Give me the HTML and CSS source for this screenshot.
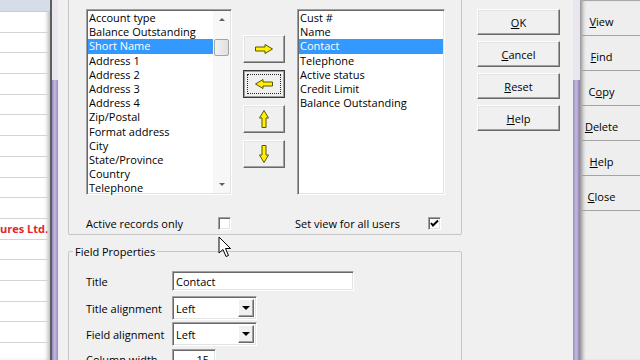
FILE: index.html
```html
<!DOCTYPE HTML>
<html>

<head>
    <title>Customer view setup</title>
    <link rel="stylesheet" href="styles.css">
</head>

<body>
    <div class="back-list">
        <div class="back-head"></div>
        <div class="back-row"></div>
        <div class="back-row"></div>
        <div class="back-row"></div>
        <div class="back-row"></div>
        <div class="back-row"></div>
        <div class="back-row"></div>
        <div class="back-row"></div>
        <div class="back-row"></div>
        <div class="back-row"></div>
        <div class="back-row"></div>
        <div class="back-row red">ures Ltd.</div>
        <div class="back-row"></div>
        <div class="back-row"></div>
        <div class="back-row"></div>
        <div class="back-row"></div>
        <div class="back-row"></div>
        <div class="back-row"></div>
    </div>

    <div class="band"></div>

    <div class="dialog">
        <div class="dialog-main">
            <fieldset class="group group-fields">
                <div class="lists">
                    <div class="listbox listbox-left">
                        <ul class="items">
                            <li>Account type</li>
                            <li>Balance Outstanding</li>
                            <li class="selected">Short Name</li>
                            <li>Address 1</li>
                            <li>Address 2</li>
                            <li>Address 3</li>
                            <li>Address 4</li>
                            <li>Zip/Postal</li>
                            <li>Format address</li>
                            <li>City</li>
                            <li>State/Province</li>
                            <li>Country</li>
                            <li>Telephone</li>
                        </ul>
                        <div class="vscroll">
                            <div class="scroll-arrow"><span class="tri-up"></span></div>
                            <div class="thumb"></div>
                            <div class="scroll-space"></div>
                            <div class="scroll-arrow"><span class="tri-down"></span></div>
                        </div>
                    </div>

                    <div class="movers">
                        <button class="mover" type="button"><svg class="arrow" width="18" height="10" viewBox="0 0 18 10"><polygon points="0.5,3 10,3 10,0.5 17.5,5 10,9.5 10,7 0.5,7" /></svg></button>
                        <button class="mover pressed" type="button"><svg class="arrow turn-left" width="18" height="10" viewBox="0 0 18 10"><polygon points="0.5,3 10,3 10,0.5 17.5,5 10,9.5 10,7 0.5,7" /></svg></button>
                        <button class="mover" type="button"><svg class="arrow turn-up" width="18" height="10" viewBox="0 0 18 10"><polygon points="0.5,3 10,3 10,0.5 17.5,5 10,9.5 10,7 0.5,7" /></svg></button>
                        <button class="mover" type="button"><svg class="arrow turn-down" width="18" height="10" viewBox="0 0 18 10"><polygon points="0.5,3 10,3 10,0.5 17.5,5 10,9.5 10,7 0.5,7" /></svg></button>
                    </div>

                    <div class="listbox listbox-right">
                        <ul class="items">
                            <li>Cust #</li>
                            <li>Name</li>
                            <li class="selected">Contact</li>
                            <li>Telephone</li>
                            <li>Active status</li>
                            <li>Credit Limit</li>
                            <li>Balance Outstanding</li>
                        </ul>
                    </div>
                </div>

                <div class="options">
                    <div class="opt opt-first">
                        <span class="opt-label">Active records only</span>
                        <span class="check"></span>
                    </div>
                    <div class="opt">
                        <span class="opt-label">Set view for all users</span>
                        <span class="check"><svg width="11" height="11" viewBox="0 0 11 11"><polyline points="2,5 4,7.5 9,2.5" /></svg></span>
                    </div>
                </div>
            </fieldset>

            <fieldset class="group group-props">
                <legend>Field Properties</legend>
                <div class="prop-row">
                    <span class="prop-label">Title</span>
                    <span class="textbox title-box">Contact</span>
                </div>
                <div class="prop-row row-combo">
                    <span class="prop-label">Title alignment</span>
                    <span class="combo"><span class="combo-text">Left</span><span class="combo-btn"><span class="tri-down big"></span></span></span>
                </div>
                <div class="prop-row row-combo2">
                    <span class="prop-label">Field alignment</span>
                    <span class="combo"><span class="combo-text">Left</span><span class="combo-btn"><span class="tri-down big"></span></span></span>
                </div>
                <div class="prop-row row-width">
                    <span class="prop-label">Column width</span>
                    <span class="textbox num-box">15</span>
                </div>
            </fieldset>
        </div>

        <div class="dialog-buttons">
            <button class="btn" type="button"><u>O</u>K</button>
            <button class="btn" type="button"><u>C</u>ancel</button>
            <button class="btn" type="button"><u>R</u>eset</button>
            <button class="btn" type="button"><u>H</u>elp</button>
        </div>
    </div>

    <div class="band band-right"></div>

    <div class="side">
        <div class="side-btn"><span><u>V</u>iew</span></div>
        <div class="side-btn"><span><u>F</u>ind</span></div>
        <div class="side-btn"><span>C<u>o</u>py</span></div>
        <div class="side-btn"><span><u>D</u>elete</span></div>
        <div class="side-btn"><span><u>H</u>elp</span></div>
        <div class="side-btn"><span><u>C</u>lose</span></div>
    </div>

    <svg class="cursor" width="15" height="22" viewBox="0 0 15 22">
        <path d="M1,1 L1,17 L5,13.5 L8,20.5 L10.5,19.5 L7.5,12.5 L12.5,12.5 Z" />
    </svg>
</body>

</html>
```

FILE: styles.css
```css
* {
    box-sizing: border-box;
}

body {
    margin: 0;
    width: 640px;
    height: 360px;
    overflow: hidden;
    display: flex;
    position: relative;
    background: #f0f0f0;
    font-family: "Open Sans", "Noto Sans", sans-serif;
    font-size: 11px;
    color: #000;
}

/* window behind the dialog */
.back-list {
    width: 50px;
    flex: none;
    background: #fff;
    overflow: hidden;
    box-shadow: inset -4px 0 4px -2px rgba(0, 0, 0, .3);
}

.back-head {
    height: 12px;
    background: #d5dde8;
    border-bottom: 1px solid #c5ccd6;
}

.back-row {
    height: 20.7px;
    border-bottom: 1px solid #d3d3d3;
    line-height: 20px;
    text-align: right;
    white-space: nowrap;
    padding-right: 2px;
}

.red {
    color: #e3262b;
    font-weight: bold;
}

.band {
    width: 8px;
    flex: none;
    background:
        linear-gradient(#e9e6f0, #e9e6f0) 2px 0 / 6px 80px no-repeat,
        linear-gradient(to right, #5e5e5e 0 2px, #9686bd 2px, #c6badf 60%, #9a8bc0);
}

.band-right {
    width: 7px;
    background:
        linear-gradient(#e9e6f0, #e9e6f0) 0 0 / 7px 80px no-repeat,
        linear-gradient(to right, #9a8bc0, #c6badf 45%, #8c7cb5);
}

/* dialog */
.dialog {
    width: 515px;
    flex: none;
    display: flex;
    padding-left: 10px;
    background: #f0f0f0;
}

.dialog-main {
    width: 394px;
}

.group {
    margin: 0;
    border: 1px solid #c6c6c6;
    border-radius: 2px;
    min-inline-size: 0;
}

.group-fields {
    margin-top: -12px;
    height: 247px;
    padding: 20px 0 0 17px;
}

.lists {
    display: flex;
}

.listbox {
    height: 186px;
    display: flex;
    background: #fff;
    border: 1px solid;
    border-color: #a0a0a0 #fff #fff #a0a0a0;
    box-shadow: inset 1px 1px #696969, inset -1px -1px #e3e3e3;
    padding: 1px 1px 1px 1px;
}

.listbox-left {
    width: 146px;
}

.listbox-right {
    width: 148px;
}

.items {
    flex: 1;
    list-style: none;
    margin: 0;
    padding: 0;
}

.items li {
    height: 14.2px;
    line-height: 14px;
    padding-left: 1px;
    white-space: nowrap;
}

.items li.selected {
    background: #3399ff;
    color: #fff;
}

.vscroll {
    width: 17px;
    display: flex;
    flex-direction: column;
    align-items: center;
    background: #f7f7f7;
}

.scroll-arrow {
    height: 17px;
    width: 17px;
    display: flex;
    align-items: center;
    justify-content: center;
}

.scroll-space {
    flex: 1;
}

.thumb {
    margin-top: 11px;
    width: 15px;
    height: 17px;
    border: 1px solid #a4a4a4;
    border-radius: 2px;
    background: linear-gradient(to right, #f2f2f2, #e0e0e0);
}

.tri-up,
.tri-down {
    width: 0;
    height: 0;
    border-left: 3px solid transparent;
    border-right: 3px solid transparent;
}

.tri-up {
    border-bottom: 3px solid #606060;
}

.tri-down {
    border-top: 3px solid #606060;
}

.tri-down.big {
    border-left-width: 4px;
    border-right-width: 4px;
    border-top: 4px solid #000;
}

/* move buttons */
.movers {
    width: 42px;
    margin: 26px 12px 0 11px;
    display: flex;
    flex-direction: column;
    gap: 7px;
}

.mover,
.btn {
    font: inherit;
    color: #000;
    background: #f0f0f0;
    border: 1px solid;
    border-color: #fff #696969 #696969 #fff;
    box-shadow: inset -1px -1px #a0a0a0, inset 1px 1px #e3e3e3;
    padding: 0;
}

.mover {
    height: 28px;
    display: flex;
    align-items: center;
    justify-content: center;
    position: relative;
}

.mover.pressed {
    border-color: #3a3a3a;
    box-shadow: inset 1px 1px #a0a0a0, inset -1px -1px #a0a0a0;
}

.mover.pressed::after {
    content: "";
    position: absolute;
    inset: 3px;
    border: 1px dotted #222;
}

.arrow polygon {
    fill: #fff200;
    stroke: #5a5500;
    stroke-width: 1;
}

.turn-left {
    transform: rotate(180deg);
}

.turn-up {
    transform: rotate(-90deg);
}

.turn-down {
    transform: rotate(90deg);
}

/* check boxes */
.options {
    display: flex;
    align-items: center;
    height: 16px;
    margin-top: 20px;
}

.opt {
    display: flex;
    align-items: center;
}

.opt-first {
    margin-right: 64px;
}

.opt-label {
    width: 132px;
}

.opt + .opt .opt-label {
    width: 133px;
}

.check {
    width: 13px;
    height: 13px;
    background: #fff;
    border: 1px solid;
    border-color: #a0a0a0 #fff #fff #a0a0a0;
    box-shadow: inset 1px 1px #696969, inset -1px -1px #e3e3e3;
    display: flex;
}

.check polyline {
    fill: none;
    stroke: #000;
    stroke-width: 2;
}

/* field properties */
.group-props {
    margin-top: 9px;
    height: 160px;
    padding: 12px 0 0 17px;
}

.group-props legend {
    margin-left: -13px;
    padding: 0 2px;
    line-height: 15px;
}

.prop-row {
    display: flex;
    align-items: center;
    height: 20px;
}

.row-combo {
    height: 24px;
    margin-top: 5px;
}

.row-combo2 {
    height: 24px;
    margin-top: 2px;
}

.row-width {
    margin-top: 3px;
}

.prop-label {
    width: 86px;
    white-space: nowrap;
}

.textbox,
.combo {
    height: 100%;
    background: #fff;
    border: 1px solid;
    border-color: #a0a0a0 #fff #fff #a0a0a0;
    box-shadow: inset 1px 1px #696969, inset -1px -1px #e3e3e3;
    display: flex;
    align-items: center;
    padding-left: 3px;
}

.title-box {
    width: 182px;
}

.num-box {
    width: 44px;
    justify-content: flex-end;
    padding-right: 6px;
}

.combo {
    width: 85px;
    padding-right: 2px;
}

.combo-text {
    flex: 1;
}

.combo-btn {
    width: 16px;
    height: 18px;
    background: #f0f0f0;
    border: 1px solid;
    border-color: #fff #696969 #696969 #fff;
    box-shadow: inset -1px -1px #a0a0a0;
    display: flex;
    align-items: center;
    justify-content: center;
}

/* OK / Cancel */
.dialog-buttons {
    margin-left: 15px;
    padding-top: 9px;
    display: flex;
    flex-direction: column;
    gap: 6px;
}

.btn {
    width: 83px;
    height: 26px;
}

/* toolbar of the window behind, right side */
.side {
    flex: 1;
    background: #eeeeee;
    border-top: 1px solid #a8a8a8;
    box-shadow: inset 5px 0 4px -3px rgba(0, 0, 0, .45);
}

.side-btn {
    height: 35px;
    border-bottom: 1px solid #a4a4a4;
    padding-top: 12px;
    line-height: 17px;
}

.side-btn span {
    display: block;
    width: 43px;
    text-align: center;
}

.cursor {
    position: absolute;
    left: 218px;
    top: 236px;
}

.cursor path {
    fill: #fff;
    stroke: #000;
    stroke-width: 1;
    stroke-linejoin: round;
}
```
